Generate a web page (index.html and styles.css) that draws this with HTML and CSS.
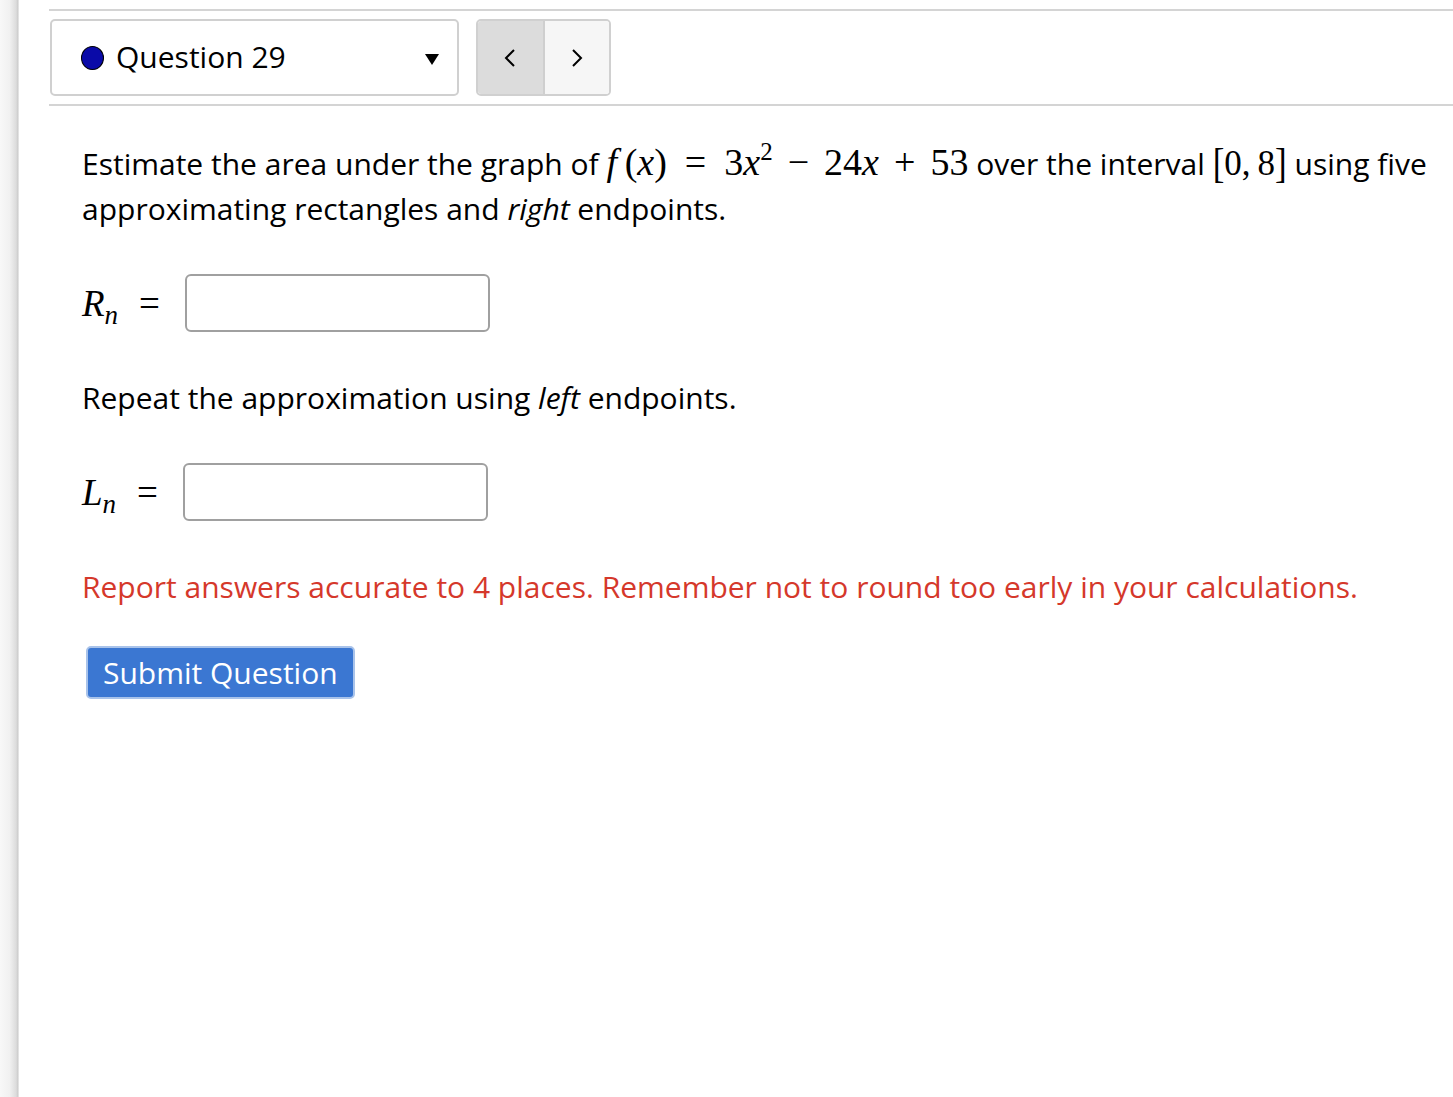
FILE: index.html
```html
<!doctype html>
<html lang="en">
<head>
<meta charset="utf-8">
<title>Question 29</title>
<link rel="stylesheet" href="styles.css">
</head>
<body>

<div class="page">
  <div class="side-bar"></div>

  <div class="main">
    <div class="question-nav">
      <div class="question-select">
        <span class="status-dot"></span>
        <span class="question-label">Question 29</span>
        <span class="caret"></span>
      </div>
      <div class="pager">
        <button class="pager-btn prev" aria-label="Previous">
          <svg width="14" height="22" viewBox="0 0 14 22"><polyline points="11,3 3,11 11,19" fill="none" stroke="#000" stroke-width="2"/></svg>
        </button>
        <button class="pager-btn next" aria-label="Next">
          <svg width="14" height="22" viewBox="0 0 14 22"><polyline points="3,3 11,11 3,19" fill="none" stroke="#000" stroke-width="2"/></svg>
        </button>
      </div>
    </div>

    <div class="question">
      <p>
        Estimate the area under the graph of
        <span class="math"><i>f</i>&thinsp;(<i>x</i>)<span class="rel">=</span>3<i>x</i><sup>2</sup><span class="bin">&minus;</span>24<i>x</i><span class="bin">+</span>53</span>
        over the interval <span class="math interval"><span class="bracket">[</span>0,&thinsp;8<span class="bracket">]</span></span> using five approximating rectangles and <em>right</em> endpoints.
      </p>

      <div class="answer-row">
        <span class="math label"><i>R</i><sub><i>n</i></sub><span class="rel">=</span></span>
        <input class="answer" type="text">
      </div>

      <p>Repeat the approximation using <em>left</em> endpoints.</p>

      <div class="answer-row">
        <span class="math label"><i>L</i><sub><i>n</i></sub><span class="rel">=</span></span>
        <input class="answer" type="text">
      </div>

      <p class="warning">Report answers accurate to 4 places. Remember not to round too early in your calculations.</p>

      <button class="submit">Submit Question</button>
    </div>
  </div>
</div>

</body>
</html>
```

FILE: styles.css
```css
html, body {
  margin: 0;
  background: #fff;
}

body {
  color: #000;
  font-family: "Open Sans", "Noto Sans", sans-serif;
}

.page {
  display: flex;
  min-height: 1097px;
}

.side-bar {
  background: linear-gradient(to right, #f8f8f8 0, #f1f1f1 50%, #dcdcdc 85%, #cfcfcf 92%, #ececec 100%);
  flex: 0 0 19px;
}

.main {
  flex: 1;
  padding-left: 30px;
  padding-top: 9px;
}

/* question picker and pager */
.question-nav {
  align-items: center;
  border-bottom: 2px solid #d4d4d4;
  border-top: 2px solid #d4d4d4;
  display: flex;
  gap: 17px;
  padding: 8px 0 8px 1px;
}

.question-select {
  align-items: center;
  border: 2px solid #d0d0d0;
  border-radius: 5px;
  box-sizing: border-box;
  display: flex;
  height: 77px;
  padding: 0 18px 0 29px;
  width: 409px;
}

.status-dot {
  background: #0a0aa8;
  border: 1.5px solid #000;
  border-radius: 50%;
  box-sizing: border-box;
  height: 24px;
  width: 23px;
}

.question-label {
  flex: 1;
  font-size: 30px;
  margin-left: 12px;
  margin-top: -2px;
}

.caret {
  border-left: 7px solid transparent;
  border-right: 7px solid transparent;
  border-top: 11px solid #000;
  height: 0;
  margin-top: 4px;
  width: 0;
}

.pager {
  border: 2px solid #d0d0d0;
  border-radius: 5px;
  box-sizing: border-box;
  display: flex;
  height: 77px;
  overflow: hidden;
  width: 135px;
}

.pager-btn {
  align-items: center;
  border: 0;
  display: flex;
  flex: 1;
  justify-content: center;
  padding: 0;
}

.pager-btn.prev {
  background: #dcdcdc;
  border-right: 2px solid #cfcfcf;
}

.pager-btn.next {
  background: #f6f6f6;
}

/* question body */
.question {
  padding: 35px 0 0 33px;
}

.question p {
  font-size: 30px;
  line-height: 45px;
  margin: 0;
}

.question p + .answer-row,
.answer-row + p {
  margin-top: 43px;
}

.question .warning {
  color: #d5382b;
}

.math {
  font-family: "Liberation Serif", "DejaVu Serif", serif;
  font-size: 38px;
  line-height: 1;
  white-space: nowrap;
}

.math.interval {
  font-size: 35px;
}

.math i {
  font-style: italic;
}

.math sup {
  font-size: 25px;
  line-height: 0;
  vertical-align: 15px;
}

.math .rel {
  margin: 0 18px;
}

.math .bin {
  margin: 0 15px;
}

.math .bracket {
  display: inline-block;
  transform: scaleY(1.2);
}

.math.label {
  font-size: 37px;
}

.math.label sub {
  font-size: 27px;
  line-height: 0;
  vertical-align: -8px;
}

.answer-row {
  align-items: center;
  display: flex;
  height: 58px;
}

.answer-row .math .rel {
  margin: 0 25px 0 21px;
}

.answer {
  border: 2px solid #a0a0a0;
  border-radius: 6px;
  box-sizing: border-box;
  height: 58px;
  width: 305px;
}

.submit {
  background: #3b77d2;
  border: 2px solid #a9c3ea;
  border-radius: 5px;
  color: #fff;
  font-family: "Open Sans", "Noto Sans", sans-serif;
  font-size: 30px;
  height: 53px;
  margin: 37px 0 0 4px;
  padding: 0 15px;
}
```
